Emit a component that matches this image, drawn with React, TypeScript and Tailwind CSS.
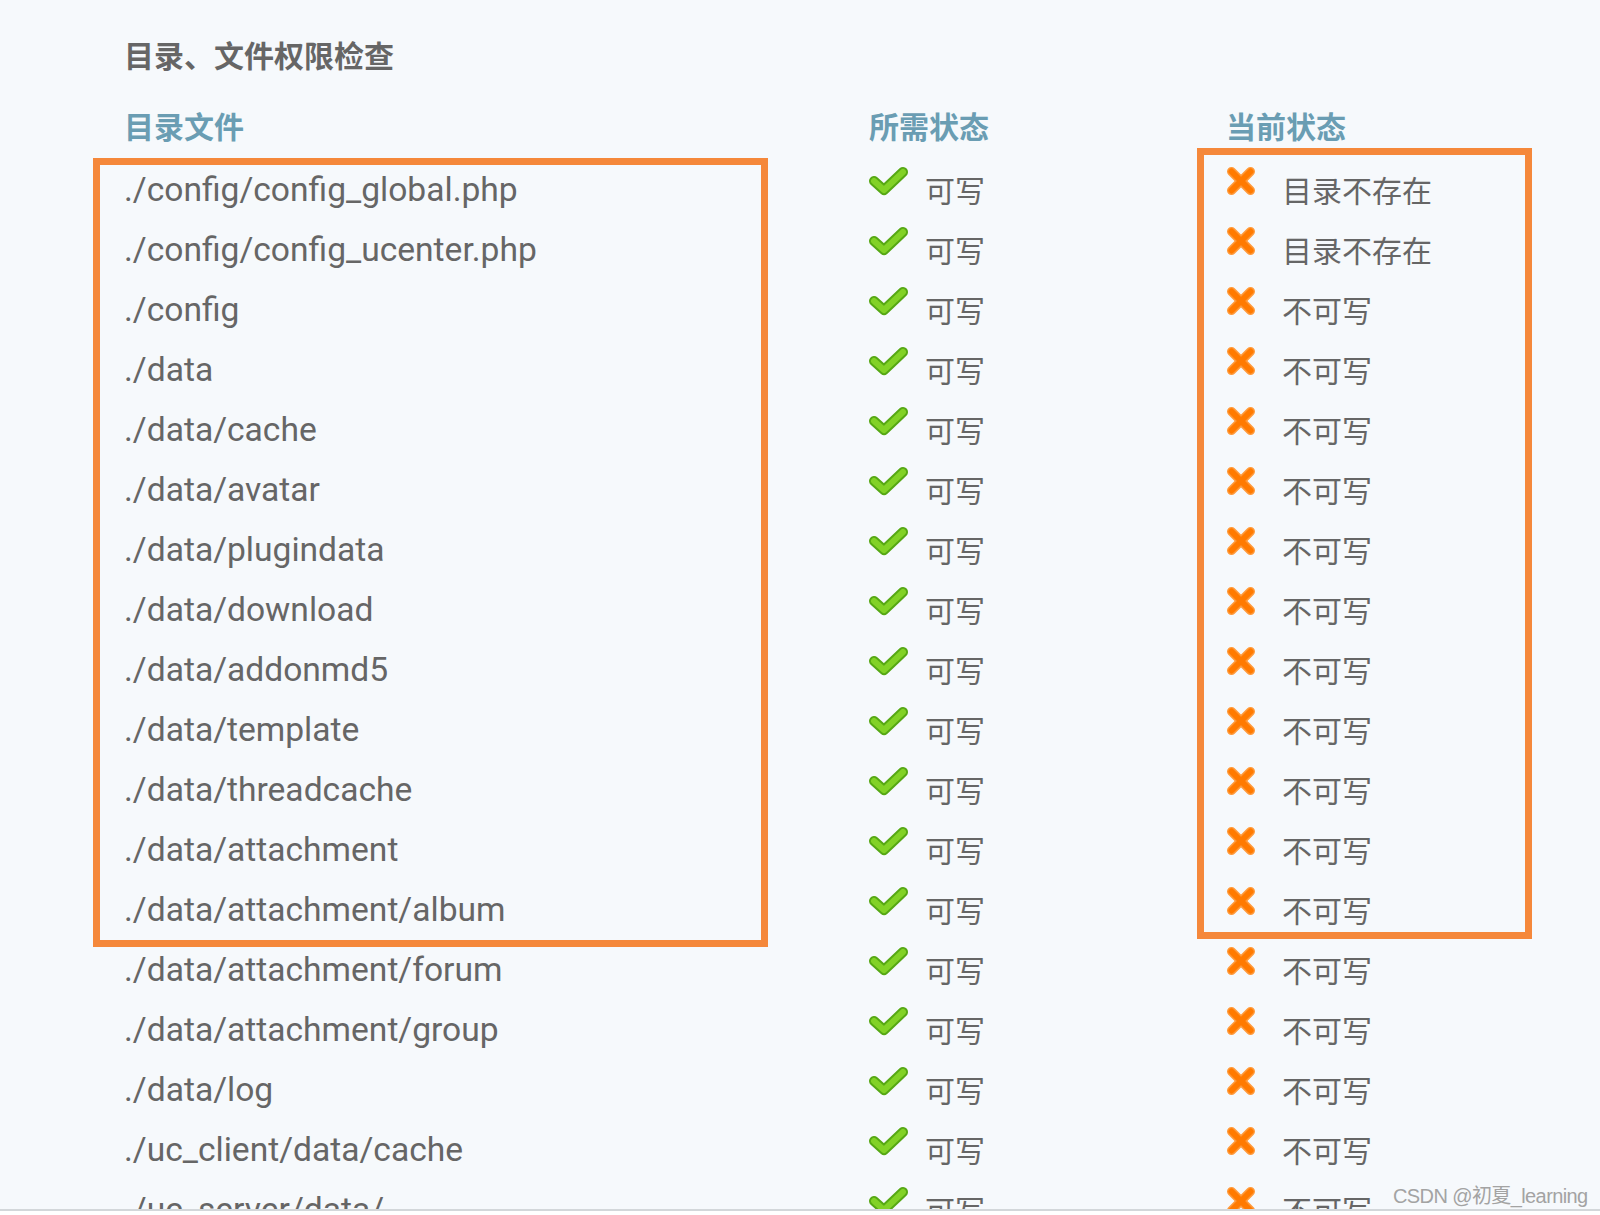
import React from "react";

const rows: [string, string][] = [
  ["./config/config_global.php", "目录不存在"],
  ["./config/config_ucenter.php", "目录不存在"],
  ["./config", "不可写"],
  ["./data", "不可写"],
  ["./data/cache", "不可写"],
  ["./data/avatar", "不可写"],
  ["./data/plugindata", "不可写"],
  ["./data/download", "不可写"],
  ["./data/addonmd5", "不可写"],
  ["./data/template", "不可写"],
  ["./data/threadcache", "不可写"],
  ["./data/attachment", "不可写"],
  ["./data/attachment/album", "不可写"],
  ["./data/attachment/forum", "不可写"],
  ["./data/attachment/group", "不可写"],
  ["./data/log", "不可写"],
  ["./uc_client/data/cache", "不可写"],
  ["./uc_server/data/", "不可写"],
];

function Check() {
  return (
    <svg width="40" height="32" viewBox="0 0 40 32" className="shrink-0 mb-[17px]">
      <polyline points="5,16 15,25 34,7" fill="none" stroke="#56a814" strokeWidth="10" strokeLinejoin="round" strokeLinecap="round" />
      <polyline points="5,16 15,25 34,7" fill="none" stroke="#82d226" strokeWidth="6" strokeLinejoin="round" strokeLinecap="round" />
    </svg>
  );
}

function Cross() {
  return (
    <svg width="30" height="30" viewBox="0 0 30 30" className="shrink-0 mb-[17px]">
      <g stroke="#ff9a3a" strokeWidth="9" strokeLinecap="round">
        <line x1="5.5" y1="5.5" x2="24.5" y2="24.5" />
        <line x1="24.5" y1="5.5" x2="5.5" y2="24.5" />
      </g>
      <g stroke="#ff7a00" strokeWidth="6" strokeLinecap="round">
        <line x1="5.5" y1="5.5" x2="24.5" y2="24.5" />
        <line x1="24.5" y1="5.5" x2="5.5" y2="24.5" />
      </g>
    </svg>
  );
}

export default function App() {
  const cjk = { fontFamily: '"Noto Sans CJK SC", sans-serif' };
  return (
    <div
      className="relative h-[1211px] overflow-hidden bg-[#f6f9fc] border-b-2 border-[#d3d7da]"
      style={cjk}
    >
      <div className="pl-[124px] pt-[34px]">
        <h1 className="text-[30px] leading-[40px] font-bold text-[#666666]">目录、文件权限检查</h1>
        <div className="grid grid-cols-[745px_357px_1fr] mt-[31px] h-[40px] items-center text-[30px] leading-[40px] font-bold text-[#6a9db3]">
          <div>目录文件</div>
          <div>所需状态</div>
          <div>当前状态</div>
        </div>
        <div className="mt-[14px]">
          {rows.map(([path, cur]) => (
            <div key={path} className="grid grid-cols-[745px_357px_1fr] h-[60px] items-center">
              <div
                className="text-[33.6px] leading-[40px] text-[#666666] mt-[2px]"
                style={{ fontFamily: 'Roboto, "Noto Sans CJK SC", sans-serif' }}
              >
                {path}
              </div>
              <div className="flex items-center">
                <Check />
                <span className="ml-[16px] text-[30px] leading-[40px] text-[#666666]">可写</span>
              </div>
              <div className="flex items-center">
                <Cross />
                <span className="ml-[26px] text-[30px] leading-[40px] text-[#666666]">{cur}</span>
              </div>
            </div>
          ))}
        </div>
      </div>

      <div className="absolute left-[93px] top-[158px] w-[675px] h-[789px] border-[7px] border-[#f5883b]" />
      <div className="absolute left-[1197px] top-[148px] w-[335px] h-[791px] border-[7px] border-[#f5883b]" />

      <div
        className="absolute left-[1393px] top-[1183px] text-[20px] leading-[26px] tracking-[-0.6px] text-[#a3a3a3] whitespace-nowrap"
        style={{ fontFamily: '"Liberation Sans", "Noto Sans CJK SC", sans-serif' }}
      >
        CSDN @初夏_learning
      </div>
    </div>
  );
}
